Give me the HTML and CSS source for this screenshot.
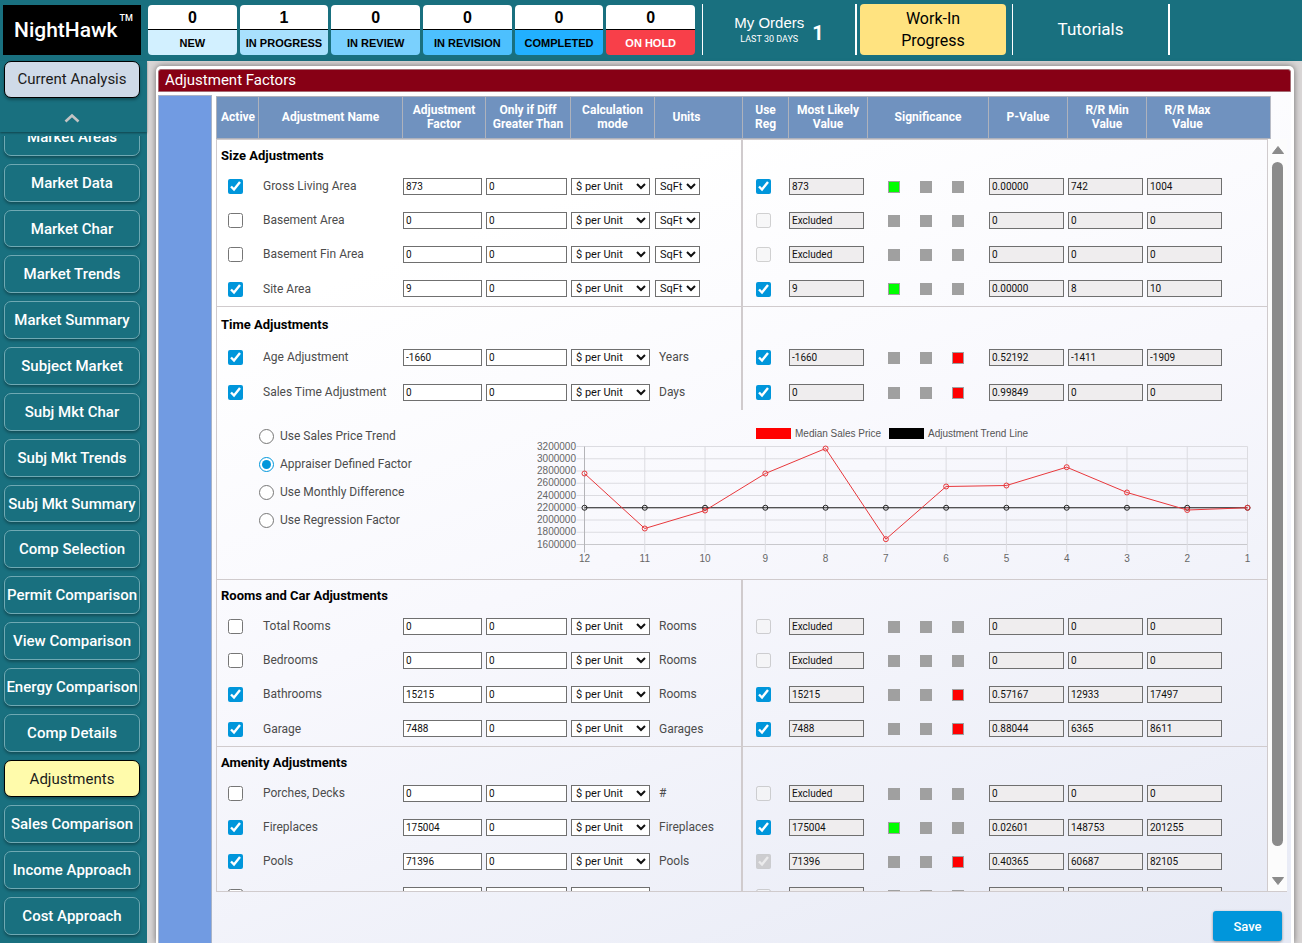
FILE: index.html
```
<!DOCTYPE html>
<html lang="en">
<head>
    <meta charset="UTF-8">
    <meta name="viewport" content="width=device-width, initial-scale=1.0">
    <title>NightHawk - Adjustment Factors</title>
    <link rel="stylesheet" href="styles.css">
</head>
<body>
    <header class="topbar">
        <div class="logo">NightHawk<sup>TM</sup></div>
        <div class="counters">
            <a href="#" class="counter new"><b>0</b><span>NEW</span></a>
            <a href="#" class="counter progress"><b>1</b><span>IN PROGRESS</span></a>
            <a href="#" class="counter review"><b>0</b><span>IN REVIEW</span></a>
            <a href="#" class="counter revision"><b>0</b><span>IN REVISION</span></a>
            <a href="#" class="counter completed"><b>0</b><span>COMPLETED</span></a>
            <a href="#" class="counter hold"><b>0</b><span>ON HOLD</span></a>
        </div>
        <a href="#" class="my-orders">
            <span class="orders-label">My Orders<small>LAST 30 DAYS</small></span>
            <strong>1</strong>
        </a>
        <button class="wip">Work-In<br>Progress</button>
        <a href="#" class="tutorials">Tutorials</a>
    </header>

    <div class="page">
        <aside class="sidebar">
            <div class="side-top">
                <button class="side-btn current">Current Analysis</button>
                <button class="scroll-up" aria-label="Scroll up">
                    <svg width="16" height="10" viewBox="0 0 16 10"><path d="M1.500 8.500 L8 2.500 L14.500 8.500" fill="none" stroke="#c4c4c4" stroke-width="2.600"/></svg>
                </button>
            </div>
            <nav class="side-scroll">
                <div class="side-list">
                    <button class="side-btn">Market Areas</button>
                    <button class="side-btn">Market Data</button>
                    <button class="side-btn">Market Char</button>
                    <button class="side-btn">Market Trends</button>
                    <button class="side-btn">Market Summary</button>
                    <button class="side-btn">Subject Market</button>
                    <button class="side-btn">Subj Mkt Char</button>
                    <button class="side-btn">Subj Mkt Trends</button>
                    <button class="side-btn">Subj Mkt Summary</button>
                    <button class="side-btn">Comp Selection</button>
                    <button class="side-btn">Permit Comparison</button>
                    <button class="side-btn">View Comparison</button>
                    <button class="side-btn">Energy Comparison</button>
                    <button class="side-btn">Comp Details</button>
                    <button class="side-btn selected">Adjustments</button>
                    <button class="side-btn">Sales Comparison</button>
                    <button class="side-btn">Income Approach</button>
                    <button class="side-btn">Cost Approach</button>
                </div>
            </nav>
        </aside>

        <main class="main">
            <section class="panel">
                <h1>Adjustment Factors</h1>
                <div class="panel-body">
                    <div class="blue-bar"></div>
                    <div class="content">
                        <table class="grid grid-head">
                            <colgroup>
                                <col class="c-active"><col class="c-name"><col class="c-factor"><col class="c-diff"><col class="c-mode"><col class="c-units">
                                <col class="c-reg"><col class="c-value"><col class="c-sig"><col class="c-value"><col class="c-value"><col>
                            </colgroup>
                            <thead>
                                <tr>
                                    <th>Active</th>
                                    <th>Adjustment Name</th>
                                    <th>Adjustment Factor</th>
                                    <th>Only if Diff Greater Than</th>
                                    <th>Calculation mode</th>
                                    <th class="th-units">Units</th>
                                    <th>Use<br>Reg</th>
                                    <th>Most Likely Value</th>
                                    <th>Significance</th>
                                    <th>P-Value</th>
                                    <th>R/R Min<br>Value</th>
                                    <th class="th-max">R/R Max<br>Value</th>
                                </tr>
                            </thead>
                        </table>
                        <div class="scroll-row">
                            <div class="scroll-area">
                                <table class="grid grid-body" id="adjustments">
                                    <colgroup>
                                        <col class="c-active"><col class="c-name"><col class="c-factor"><col class="c-diff"><col class="c-mode"><col class="c-units">
                                        <col class="c-reg"><col class="c-value"><col class="c-sig"><col class="c-value"><col class="c-value"><col>
                                    </colgroup>
                                    <tbody id="size"></tbody>
                                    <tbody id="time"></tbody>
                                    <tbody>
                                        <tr class="trend-row">
                                            <td colspan="12">
                                                <div class="trend">
                                                    <div class="trend-options">
                                                        <label><input type="radio" name="trend">Use Sales Price Trend</label>
                                                        <label><input type="radio" name="trend" checked>Appraiser Defined Factor</label>
                                                        <label><input type="radio" name="trend">Use Monthly Difference</label>
                                                        <label><input type="radio" name="trend">Use Regression Factor</label>
                                                    </div>
                                                    <svg id="chart" class="chart" viewBox="0 0 730 150" role="img" aria-label="Median sales price by month"></svg>
                                                </div>
                                            </td>
                                        </tr>
                                    </tbody>
                                    <tbody id="rooms"></tbody>
                                    <tbody id="amenity"></tbody>
                                </table>
                            </div>
                            <div class="scrollbar">
                                <svg width="14" height="10" viewBox="0 0 14 10"><path d="M7 1.500 L12.500 8.500 H1.500 Z" fill="#8b8b8b" stroke="#8b8b8b" stroke-linejoin="round"/></svg>
                                <div class="thumb"></div>
                                <svg width="14" height="10" viewBox="0 0 14 10"><path d="M7 8.500 L12.500 1.500 H1.500 Z" fill="#8b8b8b" stroke="#8b8b8b" stroke-linejoin="round"/></svg>
                            </div>
                        </div>
                        <div class="footer">
                            <button class="save">Save</button>
                        </div>
                    </div>
                </div>
            </section>
        </main>
    </div>
    <script src="script.js"></script>
</body>
</html>
```
FILE: styles.css
```
* {
    box-sizing: border-box;
}
body {
    margin: 0;
    height: 100vh;
    display: flex;
    flex-direction: column;
    overflow: hidden;
    background-color: #d9d6d6;
    font-family: Roboto, "Liberation Sans", sans-serif;
    font-size: 12px;
    color: #000;
}
button, input, select {
    font-family: inherit;
}
a {
    color: inherit;
    text-decoration: none;
}

/* top bar */
.topbar {
    display: flex;
    flex: none;
    height: 61px;
    padding: 4px 3px 6px;
    background-color: #19707f;
    color: white;
}
.logo {
    width: 138px;
    margin-top: 1px;
    padding-left: 11px;
    background-color: black;
    font-size: 21px;
    font-weight: 500;
    line-height: 50px;
    white-space: nowrap;
}
.logo sup {
    margin-left: 2px;
    font-size: 9px;
    line-height: 0;
    vertical-align: 16px;
}
.counters {
    display: flex;
    gap: 3px;
    width: 547px;
    margin: 1px 7px 0;
    font-family: "Liberation Sans", Arial, sans-serif;
    color: black;
}
.counter {
    flex: 1;
    display: flex;
    flex-direction: column;
    border-radius: 4px;
    overflow: hidden;
    text-align: center;
}
.counter b {
    height: 25px;
    background-color: white;
    border-bottom: 1px solid black;
    font-size: 16px;
    line-height: 26px;
}
.counter span {
    flex: 1;
    font-size: 11px;
    font-weight: bold;
    line-height: 26px;
}
.new span { background-color: #d2f0ff; }
.progress span { background-color: #a8e0fd; }
.review span { background-color: #7ad0fd; }
.revision span { background-color: #4dc0fe; }
.completed span { background-color: #22b0ff; }
.hold span { background-color: #f83f49; color: white; }
.my-orders {
    display: flex;
    align-items: center;
    justify-content: center;
    gap: 8px;
    width: 155px;
    padding-top: 2px;
    border-left: 1px solid white;
    border-right: 2px solid white;
    font-family: "Liberation Sans", Arial, sans-serif;
}
.orders-label {
    font-size: 15px;
    text-align: center;
}
.orders-label small {
    display: block;
    font-family: Roboto, sans-serif;
    font-size: 9px;
    line-height: 16px;
}
.my-orders strong {
    font-family: Roboto, sans-serif;
    font-size: 20px;
    padding-top: 4px;
}
.wip {
    width: 146px;
    margin: 0 6px 0 3px;
    border: none;
    border-radius: 4px;
    background-color: #ffe380;
    color: black;
    font-size: 16px;
    line-height: 22px;
}
.tutorials {
    width: 158px;
    border-left: 1px solid white;
    border-right: 2px solid white;
    font-size: 17px;
    line-height: 50px;
    text-align: center;
}

/* left menu */
.page {
    display: flex;
    flex: 1;
    min-height: 0;
}
.sidebar {
    display: flex;
    flex-direction: column;
    gap: 4px;
    width: 147px;
    flex: none;
    background-color: #19707f;
}
.side-top {
    display: flex;
    flex-direction: column;
    align-items: center;
    height: 71px;
    padding-right: 3px;
    box-shadow: 0 1px 2px rgba(0, 0, 0, 0.4);
}
.side-btn {
    width: 136px;
    padding: 0;
    border: 1px solid #6fa9b3;
    border-radius: 7px;
    background-color: #19707f;
    box-shadow: 0 2px 3px rgba(0, 0, 0, 0.3);
    color: white;
    font-size: 15px;
    font-weight: 500;
    white-space: nowrap;
}
.side-btn.current {
    height: 37px;
    padding-bottom: 2px;
    border-color: black;
    background-color: #cfdae8;
    color: #1b1b1b;
    font-weight: 400;
}
.side-btn.selected {
    border-color: black;
    background-color: #fffbab;
    color: #1b1b1b;
    font-weight: 400;
}
.scroll-up {
    margin-top: 12px;
    border: none;
    background: none;
}
.side-scroll {
    flex: 1;
    min-height: 0;
    overflow: hidden;
}
.side-list {
    display: flex;
    flex-direction: column;
    align-items: center;
    gap: 8px;
    height: calc(100% + 18px);
    margin-top: -18px;
    padding: 0 3px 8px 0;
}
.side-list .side-btn {
    flex: 1;
}

/* main panel */
.main {
    display: flex;
    flex: 1;
    min-width: 0;
    padding: 5px 8px 0 9px;
}
.panel {
    display: flex;
    flex-direction: column;
    flex: 1;
    min-width: 0;
    padding: 3px 3px 0 2px;
    border-radius: 5px 5px 0 0;
    background-color: white;
    box-shadow: 0 0 6px rgba(0, 0, 0, 0.5);
}
.panel h1 {
    margin: 0;
    padding-left: 6px;
    border: 1px solid #a56a72;
    border-radius: 3px 3px 0 0;
    background-color: #870015;
    color: white;
    font-size: 15px;
    font-weight: 400;
    line-height: 21px;
}
.panel-body {
    display: flex;
    flex: 1;
    gap: 4px;
    min-height: 0;
    padding-top: 3px;
    background: linear-gradient(160deg, white 20%, #f8f8fd 50%, #e7eaf5);
}
.blue-bar {
    width: 54px;
    flex: none;
    border: 1px solid #a9b4c8;
    border-bottom: none;
    background-color: #719be2;
}
.content {
    display: flex;
    flex-direction: column;
    flex: 1;
    min-width: 0;
    padding: 1px 4px 0 0;
}

/* tables */
.grid {
    table-layout: fixed;
    border-collapse: separate;
    border-spacing: 0;
    width: 100%;
}
.c-active { width: 42px; }
.c-name { width: 144px; }
.c-factor { width: 83px; }
.c-diff { width: 85px; }
.c-mode { width: 84px; }
.c-units { width: 88px; }
.c-reg { width: 46px; }
.c-value { width: 79px; }
.c-sig { width: 121px; }
.grid-head {
    flex: none;
    width: calc(100% - 16px);
    border-right: 1px solid #b9bcc6;
}
.grid-head th {
    height: 43px;
    padding: 0 4px 2px;
    border: 1px solid #aeb2bc;
    border-width: 1px 0 1px 1px;
    background-color: #7092bf;
    color: white;
    font-size: 12px;
    line-height: 14px;
}
.grid-head .th-units {
    padding-right: 28px;
}
.grid-head .th-max {
    padding-right: 46px;
}
.scroll-row {
    display: flex;
    flex: 1;
    min-height: 0;
    border-bottom: 1px solid #d0cbcd;
}
.scroll-area {
    flex: 1;
    min-width: 0;
    overflow: hidden;
    border: 1px solid #d0cbcd;
    border-width: 0 1px;
}
.grid-body td {
    padding: 0;
    line-height: 14px;
}
.title-row {
    height: 30px;
}
#time .title-row {
    height: 34px;
}
.grid-body .title-row td {
    padding: 2px 0 0 4px;
    border-top: 1px solid #d0cbcd;
    font-size: 13px;
    font-weight: bold;
}
.item-row {
    height: 34px;
}
.item-row:last-child {
    height: 35px;
}
#time .item-row:last-child {
    height: 36px;
}
.grid-body td.split {
    border-right: 2px solid #d0cbcd;
}
.name-cell, .unit-text {
    color: #4c4c4c;
}
.grid-body td.name-cell {
    padding-left: 4px;
}
.unit-text {
    padding-left: 4px;
}
input[type="checkbox"], input[type="radio"] {
    display: block;
    width: 15px;
    height: 15px;
    margin: 1px 0 0 11px;
    accent-color: #0096db;
}
.grid-body .reg-cell input {
    margin-left: 13px;
}
.grid-body input[type="text"] {
    display: block;
    width: 79px;
    height: 17px;
    padding: 0 2px;
    border: 1px solid #6f6f6f;
    background-color: white;
    color: #111;
    font-size: 10px;
}
.grid-body .diff-cell input {
    width: 81px;
}
.grid-body input.result {
    width: 75px;
    background-color: #efedee;
}
.grid-body select {
    display: block;
    width: 79px;
    height: 17px;
    padding: 0;
    border: 1px solid #6f6f6f;
    border-radius: 0;
    background-color: white;
    color: #111;
    font-size: 11px;
}
.grid-body select.unit-select {
    width: 45px;
}
.lights {
    display: flex;
    gap: 20px;
    padding: 1px 0 0 20px;
}
.light {
    width: 12px;
    height: 12px;
    border: 1px solid #a0a0a0;
    background-color: #a0a0a0;
}
.light.green {
    background-color: #00ff00;
}
.light.red {
    background-color: #ff0000;
}

/* trend options and chart */
.trend-row {
    height: 169px;
}
.trend-row td {
    vertical-align: top;
}
.trend {
    display: flex;
    padding: 12px 9px 0 42px;
}
.trend-options {
    display: flex;
    flex-direction: column;
    gap: 14px;
    width: 269px;
    flex: none;
    padding-top: 7px;
    color: #4c4c4c;
}
.trend-options label {
    display: flex;
    gap: 6px;
    height: 14px;
}
.trend-options input {
    margin: 0;
}
.chart {
    flex: 1;
    min-width: 0;
    font-family: "Liberation Sans", Arial, sans-serif;
    font-size: 10px;
}

/* scrollbar */
.scrollbar {
    display: flex;
    flex-direction: column;
    align-items: center;
    gap: 7px;
    width: 19px;
    padding: 6px 0 5px;
    background-color: #fcfcfc;
}
.scrollbar svg {
    flex: none;
}
.thumb {
    width: 11px;
    flex: 1;
    margin-bottom: 23px;
    border-radius: 6px;
    background-color: #8b8b8b;
}
.footer {
    display: flex;
    justify-content: flex-end;
    flex: none;
    height: 51px;
    padding: 19px 5px 2px 0;
}
.save {
    width: 69px;
    border: none;
    border-radius: 3px;
    background-color: #0096db;
    box-shadow: 0 1px 3px rgba(0, 0, 0, 0.4);
    color: white;
    font-size: 13px;
    font-weight: 500;
}
```
FILE: script.js
```
// name, active, factor, unit, use reg, most likely value, light, p-value, min, max
const sections = {
    size: {
        title: "Size Adjustments",
        rows: [
            ["Gross Living Area", true, "873", "SqFt", "on", "873", "green", "0.00000", "742", "1004"],
            ["Basement Area", false, "0", "SqFt", "off", "Excluded", "", "0", "0", "0"],
            ["Basement Fin Area", false, "0", "SqFt", "off", "Excluded", "", "0", "0", "0"],
            ["Site Area", true, "9", "SqFt", "on", "9", "green", "0.00000", "8", "10"]
        ]
    },
    time: {
        title: "Time Adjustments",
        rows: [
            ["Age Adjustment", true, "-1660", "Years", "on", "-1660", "red", "0.52192", "-1411", "-1909"],
            ["Sales Time Adjustment", true, "0", "Days", "on", "0", "red", "0.99849", "0", "0"]
        ]
    },
    rooms: {
        title: "Rooms and Car Adjustments",
        rows: [
            ["Total Rooms", false, "0", "Rooms", "off", "Excluded", "", "0", "0", "0"],
            ["Bedrooms", false, "0", "Rooms", "off", "Excluded", "", "0", "0", "0"],
            ["Bathrooms", true, "15215", "Rooms", "on", "15215", "red", "0.57167", "12933", "17497"],
            ["Garage", true, "7488", "Garages", "on", "7488", "red", "0.88044", "6365", "8611"]
        ]
    },
    amenity: {
        title: "Amenity Adjustments",
        rows: [
            ["Porches, Decks", false, "0", "#", "off", "Excluded", "", "0", "0", "0"],
            ["Fireplaces", true, "175004", "Fireplaces", "on", "175004", "green", "0.02601", "148753", "201255"],
            ["Pools", true, "71396", "Pools", "locked", "71396", "red", "0.40365", "60687", "82105"],
            ["", false, "", "", "off", "", "", "", "", ""]
        ]
    }
};

function result(name, label, value) {
    return `<td><input type="text" class="result" readonly aria-label="${name} ${label}" value="${value}"></td>`;
}

function light(color, current) {
    return `<span class="light ${color === current ? color : ""}"></span>`;
}

function rowHtml(id, row, i) {
    const [name, active, factor, unit, reg, value, color, p, min, max] = row;
    const unitCell = unit === "SqFt"
        ? `<select class="unit-select" aria-label="${name} units"><option>SqFt</option></select>`
        : `<span class="unit-text">${unit}</span>`;
    return `<tr class="item-row">
        <td><input type="checkbox" id="${id}-${i}" ${active ? "checked" : ""}></td>
        <td class="name-cell"><label for="${id}-${i}">${name}</label></td>
        <td><input type="text" aria-label="${name} factor" value="${factor}"></td>
        <td class="diff-cell"><input type="text" aria-label="${name} only if diff greater than" value="${factor && "0"}"></td>
        <td><select aria-label="${name} calculation mode"><option>${factor && "$ per Unit"}</option></select></td>
        <td class="split">${unitCell}</td>
        <td class="reg-cell"><input type="checkbox" aria-label="${name} use regression" ${reg !== "off" ? "checked" : ""} ${reg !== "on" ? "disabled" : ""}></td>
        ${result(name, "most likely value", value)}
        <td><div class="lights">${light("green", color)}${light("yellow", color)}${light("red", color)}</div></td>
        ${result(name, "p-value", p)}
        ${result(name, "min value", min)}
        ${result(name, "max value", max)}
    </tr>`;
}

for (const id in sections) {
    const section = sections[id];
    document.getElementById(id).innerHTML =
        `<tr class="title-row"><td colspan="6" class="split">${section.title}</td><td colspan="6"></td></tr>` +
        section.rows.map((row, i) => rowHtml(id, row, i)).join("");
}

// chart
const prices = [2759000, 1861000, 2155000, 2759000, 3167000, 1687000, 2547000, 2563000, 2862000, 2449000, 2163000, 2200000];
const trend = prices.map(() => 2200000);
const left = 56.5, right = 719.5, top0 = 24.5, bottom = 122.5;

const px = i => left + i * (right - left) / 11;
const py = v => bottom - (v - 1600000) / 1600000 * (bottom - top0);

function line(x1, y1, x2, y2, color) {
    return `<line x1="${x1}" y1="${y1}" x2="${x2}" y2="${y2}" stroke="${color}"/>`;
}

function series(values, color) {
    const points = values.map((v, i) => `${px(i)},${py(v)}`).join(" ");
    return `<polyline points="${points}" fill="none" stroke="${color}"/>` +
        values.map((v, i) => `<circle cx="${px(i)}" cy="${py(v)}" r="2.5" fill="none" stroke="${color}"/>`).join("");
}

let svg = "";
for (let v = 1600000; v <= 3200000; v += 200000) {
    svg += line(left - 8, py(v), right, py(v), v === 1600000 ? "#c8c8cc" : "#dcdce1");
    svg += `<text x="48" y="${py(v) + 3}" text-anchor="end" fill="#666">${v}</text>`;
}
for (let i = 0; i < 12; i++) {
    svg += line(px(i), top0, px(i), bottom + 8, i === 0 ? "#b4b4b8" : "#dcdce1");
    svg += `<text x="${px(i)}" y="140" text-anchor="middle" fill="#666">${12 - i}</text>`;
}
svg += series(trend, "#222") + series(prices, "#e8383c");
svg += `<rect x="228" y="6" width="35" height="11" fill="#ff0000"/><text x="267" y="15" fill="#555">Median Sales Price</text>`;
svg += `<rect x="361" y="6" width="35" height="11" fill="#000"/><text x="400" y="15" fill="#555">Adjustment Trend Line</text>`;
document.getElementById("chart").innerHTML = svg;
```
